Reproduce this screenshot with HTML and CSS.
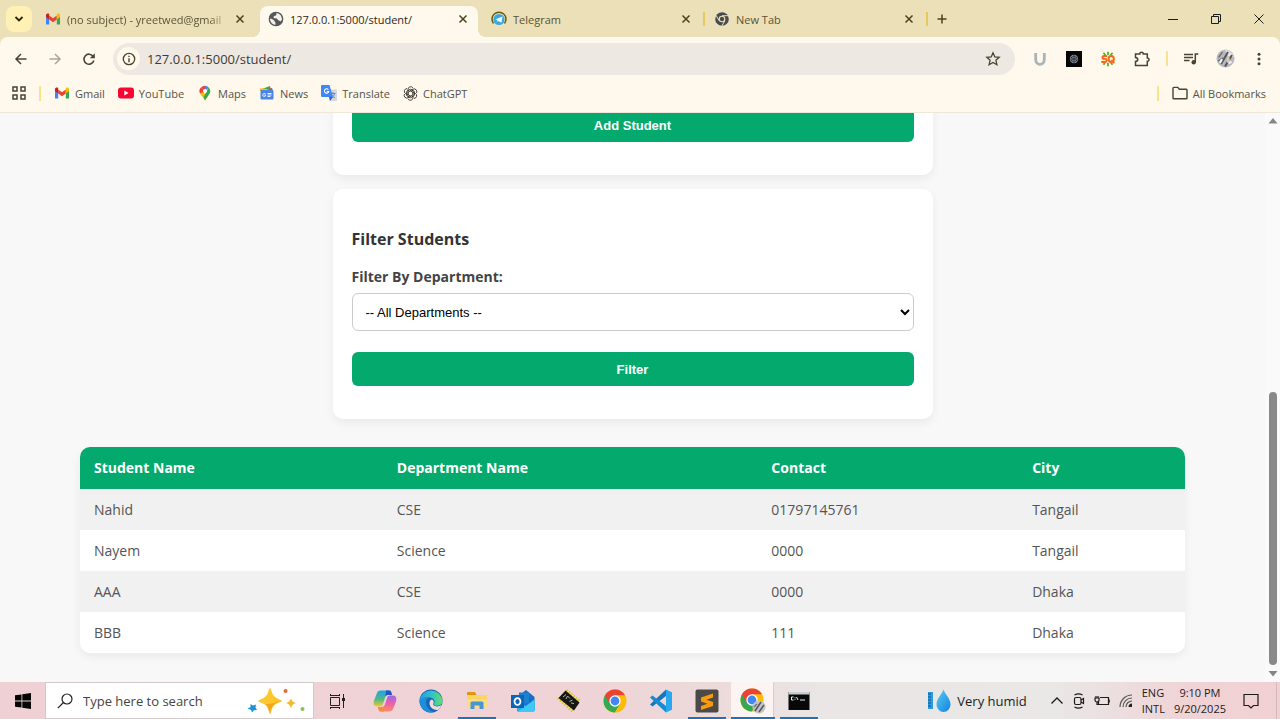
FILE: index.html
```html
<!DOCTYPE html>
<html lang="en">
<head>
<meta charset="utf-8">
<title>Students</title>
<link rel="stylesheet" href="styles.css">
</head>
<body>
<svg class="defs" aria-hidden="true">
  <symbol id="i-gmail" viewBox="0 0 16 16">
    <path d="M1 3.6V13.5H4.2V7.2z" fill="#4285f4"/><path d="M15 3.6V13.5H11.8V7.2z" fill="#34a853"/>
    <path d="M4.2 4.4L8 7.3l3.8-2.9v4L8 11.3 4.200 8.400z" fill="#ea4335"/>
    <path d="M1 4.200C1 2.500 2.900 1.900 4.200 2.900V8.400L1 6z" fill="#c5221f"/><path d="M15 4.200c0-1.700-1.900-2.300-3.200-1.300V8.400L15 6z" fill="#fbbc04"/>
  </symbol>
  <symbol id="i-close" viewBox="0 0 10 10"><path d="M1.500 1.500l7 7M8.500 1.500l-7 7" stroke="currentColor" stroke-width="1.500" fill="none"/></symbol>
  <symbol id="i-chrome" viewBox="0 0 24 24">
    <circle cx="12" cy="12" r="11.500" fill="#fbbc05"/>
    <path d="M2 6.300A11.500 11.500 0 0 0 11.700 23.500L17 14.900 12 12z" fill="#34a853"/>
    <path d="M2 6.300A11.500 11.500 0 0 1 22 6.300H12V12L7 14.900z" fill="#ea4335"/>
    <circle cx="12" cy="12" r="5.700" fill="#fff"/><circle cx="12" cy="12" r="4.400" fill="#4285f4"/>
  </symbol>
  <symbol id="i-gpt" viewBox="0 0 16 16">
    <g fill="none" stroke="currentColor" stroke-width=".9">
      <path id="petal" d="M8 5.200L5.300 6.800V3.500a2.900 2.900 0 0 1 5.400-1.300M5.300 5L8 3.400l3 1.700"/>
      <use href="#petal" transform="rotate(60 8 8)"/><use href="#petal" transform="rotate(120 8 8)"/><use href="#petal" transform="rotate(180 8 8)"/><use href="#petal" transform="rotate(240 8 8)"/><use href="#petal" transform="rotate(300 8 8)"/>
    </g>
  </symbol>
</svg>

<header class="browser">
  <div class="tabstrip">
    <button class="tab-search" aria-label="Search tabs"><svg width="10" height="10" viewBox="0 0 10 10"><path d="M1.500 3L5 6.500 8.500 3" fill="none" stroke="#2b2600" stroke-width="1.800"/></svg></button>
    <div class="tabs">
      <div class="tab">
        <svg class="favicon"><use href="#i-gmail"/></svg>
        <span class="tab-title fade">(no subject) - yreetwed@gmail</span>
        <button class="tab-close" aria-label="Close tab"><svg width="10" height="10"><use href="#i-close"/></svg></button>
      </div>
      <div class="tab active">
        <svg class="favicon" viewBox="0 0 16 16"><circle cx="8" cy="8" r="6.700" fill="#55575b"/><path d="M1.800 7.500c2 .2 3.200 1 4.300 2 1 .9.300 1.600 1.400 2.100v2.800C3.500 14 1.300 11 1.800 7.500zM8.500 1.500c-.5 1.600.4 1.900-.4 2.800-1 1-2.400.6-2.600 2.100-.1 1.200 3.500.2 4.200 2 .5 1.300 2 .7 2.600 2.200l1.600-1.300c.7-4-1.500-7.500-5.400-7.800z" fill="#f6f1e8"/><circle cx="8" cy="8" r="6.700" fill="none" stroke="#55575b" stroke-width="1.300"/></svg>
        <span class="tab-title">127.0.0.1:5000/student/</span>
        <button class="tab-close" aria-label="Close tab"><svg width="10" height="10"><use href="#i-close"/></svg></button>
      </div>
      <div class="tab">
        <svg class="favicon" viewBox="0 0 16 16"><path d="M2.500 12.500A7 7 0 1 1 13.500 12.500" fill="none" stroke="#6b5a10" stroke-width="1.500"/><circle cx="8" cy="8.500" r="5.600" fill="#35a9e0"/><path d="M4.200 8.500l7.400-3-1.200 6.200-2.600-1.800-1.200 1.200-.4-2z" fill="#fff"/></svg>
        <span class="tab-title">Telegram</span>
        <button class="tab-close" aria-label="Close tab"><svg width="10" height="10"><use href="#i-close"/></svg></button>
      </div>
      <div class="tab divided">
        <svg class="favicon" viewBox="0 0 16 16"><circle cx="8" cy="8" r="6.800" fill="#484b50"/><circle cx="8" cy="8" r="3.300" fill="#ece0b8"/><circle cx="8" cy="8" r="2.200" fill="#484b50"/><path d="M8 4.700h6.200M5.100 9.600L2 4.300M10.900 9.600L7.800 15" stroke="#ece0b8" stroke-width="1"/></svg>
        <span class="tab-title">New Tab</span>
        <button class="tab-close" aria-label="Close tab"><svg width="10" height="10"><use href="#i-close"/></svg></button>
      </div>
      <button class="new-tab" aria-label="New tab"><svg width="12" height="12" viewBox="0 0 12 12"><path d="M6 1.500v9M1.500 6h9" stroke="#4a431c" stroke-width="1.500"/></svg></button>
    </div>
    <div class="window-controls">
      <button aria-label="Minimize"><svg width="12" height="12" viewBox="0 0 12 12"><path d="M1 6.500h10" stroke="#1c1c1c"/></svg></button>
      <button aria-label="Restore"><svg width="12" height="12" viewBox="0 0 12 12"><path d="M1.500 3.500h7v7h-7zM3.500 3.500v-2h7v7h-2" fill="none" stroke="#1c1c1c"/></svg></button>
      <button aria-label="Close"><svg width="12" height="12" viewBox="0 0 12 12"><path d="M1.500 1.500l9 9M10.500 1.500l-9 9" stroke="#1c1c1c"/></svg></button>
    </div>
  </div>

  <div class="toolbar">
    <div class="nav">
      <button aria-label="Back"><svg width="14" height="14" viewBox="0 0 14 14"><path d="M12.500 7H2M7 2L2 7l5 5" fill="none" stroke="#474432" stroke-width="1.500"/></svg></button>
      <button aria-label="Forward"><svg width="14" height="14" viewBox="0 0 14 14"><path d="M1.500 7H12M7 2l5 5-5 5" fill="none" stroke="#aaa79c" stroke-width="1.500"/></svg></button>
      <button aria-label="Reload"><svg width="14" height="14" viewBox="0 0 14 14"><path d="M11.800 8.500A5 5 0 1 1 11 4.200l1.200 1.200" fill="none" stroke="#474432" stroke-width="1.600"/><path d="M12.800 1.200v5H7.800z" fill="#474432"/></svg></button>
    </div>
    <div class="omnibox">
      <button class="site-info" aria-label="Site information"><svg width="14" height="14" viewBox="0 0 14 14"><circle cx="7" cy="7" r="5.700" fill="none" stroke="#474432" stroke-width="1.300"/><path d="M7 6.200v4M7 3.700v1.400" stroke="#474432" stroke-width="1.400"/></svg></button>
      <input class="url" type="text" aria-label="Address" value="127.0.0.1:5000/student/">
      <button aria-label="Bookmark this tab"><svg width="16" height="16" viewBox="0 0 16 16"><path d="M8 1.800l1.800 4.100 4.400.4-3.300 3 1 4.400L8 11.400l-3.900 2.300 1-4.400-3.300-3 4.400-.4z" fill="none" stroke="#474432" stroke-width="1.300"/></svg></button>
    </div>
    <div class="extensions">
      <button aria-label="U extension"><svg width="16" height="16" viewBox="0 0 16 16"><path d="M3.700 2v6.800a4 4.200 0 0 0 8.600 0V2" fill="none" stroke="#a9b4b9" stroke-width="2.800"/></svg></button>
      <button aria-label="Assistant extension"><svg width="16" height="16" viewBox="0 0 16 16"><path d="M0 0h16v16H0z" fill="#050505"/><circle cx="8" cy="8" r="4.200" fill="#8d979d"/><path d="M5 6.500l3-1.500 3 1.500v3L8 11 5 9.500zM5 6.500l6 3M11 6.500l-6 3M8 4v8" fill="none" stroke="#20272b" stroke-width=".8"/></svg></button>
      <button aria-label="SQ extension"><svg width="16" height="16" viewBox="0 0 16 16"><g stroke="#55b22c" stroke-width="1.800"><path d="M8 .8v14.400M3.500 1.800l9 12M12.500 1.800l-9 12"/></g><rect x="1" y="4" width="14" height="8" rx="2" fill="#ffe9cc"/><path d="M7.200 5H4.200c-2.200 0-2.200 2.900 0 2.900h1c2.200 0 1.900 3.100-.2 3.100H1.300" fill="none" stroke="#f4681b" stroke-width="1.900"/><ellipse cx="11.200" cy="8" rx="2.600" ry="3" fill="#fff1d8" stroke="#f4681b" stroke-width="1.900"/><path d="M11.300 9l3 3.300" stroke="#f4681b" stroke-width="1.700"/></svg></button>
      <button aria-label="Extensions"><svg width="16" height="16" viewBox="0 0 16 16"><path d="M1.500 3h4.300c-.2-2.500 3.700-2.500 3.500 0h4v4c2.300-.2 2.300 3.400 0 3.200v4.300H1.500v-4c3-.3 3-3.600 0-3.900z" fill="none" stroke="#474432" stroke-width="1.500"/></svg></button>
      <span class="rule"></span>
      <button aria-label="Media controls"><svg width="16" height="16" viewBox="0 0 16 16"><path d="M1 3.500h9M1 6.500h9M1 9.500h5.500M12.300 11V3h3" fill="none" stroke="#474432" stroke-width="1.500"/><circle cx="10.700" cy="11.300" r="2.200" fill="#474432"/></svg></button>
      <button aria-label="Profile"><svg width="19" height="19" viewBox="0 0 19 19"><circle cx="9.500" cy="9.500" r="9" fill="#b9b8bd"/><path d="M9 1c4 .5 8 3 8.500 7L12 7z" fill="#e8e8ec"/><path d="M5 15L12 3M9 17.500L16 6" stroke="#55565b" stroke-width="2"/><path d="M2.500 8.500l4-5.500M2 12l5-3" stroke="#73747a" stroke-width="1.500"/><path d="M11 8l2-1 1 5-3 2z" fill="#e1c9a4"/><path d="M12.500 14l3-1M4 14l2-4" stroke="#f7f7fa" stroke-width="2"/></svg></button>
      <button aria-label="Menu"><svg width="14" height="14" viewBox="0 0 14 14"><g fill="#474432"><circle cx="7" cy="2.200" r="1.500"/><circle cx="7" cy="7" r="1.500"/><circle cx="7" cy="11.800" r="1.500"/></g></svg></button>
    </div>
  </div>

  <nav class="bookmarks" aria-label="Bookmarks">
    <button class="apps" aria-label="Apps"><svg width="14" height="14" viewBox="0 0 14 14"><path d="M1 1h4v4H1zM9 1h4v4H9zM1 9h4v4H1zM9 9h4v4H9z" fill="none" stroke="#474432" stroke-width="1.500"/></svg></button>
    <span class="rule"></span>
    <a href="#"><svg class="favicon"><use href="#i-gmail"/></svg>Gmail</a>
    <a href="#"><svg class="favicon" viewBox="0 0 16 16"><rect x="0" y="2.500" width="16" height="11" rx="3" fill="#f8062f"/><path d="M6.300 5.500v5L10.500 8z" fill="#fff"/></svg>YouTube</a>
    <a href="#"><svg class="favicon" viewBox="0 0 16 16"><path d="M8 .8a5.300 5.300 0 0 0-4 1.800L8 6z" fill="#ea4335"/><path d="M4 2.600A5.300 5.300 0 0 0 3 8.600L5.500 10 8.500 6z" fill="#ea4335"/><path d="M3 8.600c1 2.300 4.200 4 5 6.900l3-3.800L5.500 7z" fill="#fbbc04"/><path d="M11.500 2.400a5.300 5.300 0 0 1 1.300 5.900C11.800 10.700 8.800 12.500 8 15.500c-.4-1.200-.8-2-1.600-3z" fill="#34a853"/><path d="M8 .8a5.300 5.300 0 0 1 3.800 1.800L7.500 7z" fill="#4285f4"/><circle cx="8" cy="6.100" r="2" fill="#fff"/></svg>Maps</a>
    <a href="#"><svg class="favicon" viewBox="0 0 16 16"><path d="M3 4l8-3 1 4z" fill="#34a853"/><path d="M8 4l5-1 1 3z" fill="#ea4335"/><path d="M1 3.500h5L7 6H1z" fill="#fbbc04"/><rect x="1.500" y="5" width="13" height="9.500" rx="1" fill="#4a86e8"/><path d="M6.500 8.500H5.300a1.500 1.500 0 1 0 1.200 2.400V10H5.300M8.500 8.500h4M8.500 10h4M8.500 11.500h3" fill="none" stroke="#fff" stroke-width=".9"/></svg>News</a>
    <a href="#"><svg class="favicon" viewBox="0 0 16 16"><path d="M5.500 4.500H15a1 1 0 0 1 1 1V15a1 1 0 0 1-1 1H9z" fill="#d3d7de"/><path d="M9.500 8.500h5M12 7v1.500M13.700 8.500c-.5 2.200-1.700 3.600-3.700 4.500M10.500 9.500c.7 1.500 2 2.800 3.500 3.500" stroke="#6a83aa" stroke-width=".9" fill="none"/><path d="M1 0h7.500L12 12H1a1 1 0 0 1-1-1V1a1 1 0 0 1 1-1z" fill="#4285f4"/><path d="M7.400 4.600A2.200 2.200 0 1 0 7.800 6.500H5.800" fill="none" stroke="#fff" stroke-width="1.100"/><path d="M8 12h4l-3 4z" fill="#2d66c9"/></svg>Translate</a>
    <a href="#"><svg class="favicon gpt"><use href="#i-gpt"/></svg>ChatGPT</a>
    <span class="spacer"></span>
    <span class="rule"></span>
    <a href="#" class="all"><svg class="favicon" viewBox="0 0 16 16"><path d="M1 3.200a.8.800 0 0 1 .8-.8h4l1.500 1.800h7a.8.800 0 0 1 .7.800v8a.8.800 0 0 1-.8.800H1.800A.8.800 0 0 1 1 13z" fill="none" stroke="#474432" stroke-width="1.400"/></svg>All Bookmarks</a>
  </nav>
</header>

<div class="viewport">
  <main class="page">
    <form class="card">
      <button class="submit" type="button">Add Student</button>
    </form>
    <form class="card">
      <h2>Filter Students</h2>
      <label for="dept">Filter By Department:</label>
      <select id="dept"><option>-- All Departments --</option><option>CSE</option><option>Science</option></select>
      <button class="submit" type="button">Filter</button>
    </form>
    <table class="students">
      <colgroup><col class="c-name"><col class="c-dept"><col class="c-contact"><col class="c-city"></colgroup>
      <thead><tr><th>Student Name</th><th>Department Name</th><th>Contact</th><th>City</th></tr></thead>
      <tbody>
        <tr><td>Nahid</td><td>CSE</td><td>01797145761</td><td>Tangail</td></tr>
        <tr><td>Nayem</td><td>Science</td><td>0000</td><td>Tangail</td></tr>
        <tr><td>AAA</td><td>CSE</td><td>0000</td><td>Dhaka</td></tr>
        <tr><td>BBB</td><td>Science</td><td>111</td><td>Dhaka</td></tr>
      </tbody>
    </table>
  </main>
  <div class="scrollbar" aria-hidden="true">
    <svg width="10" height="6" viewBox="0 0 10 6"><path d="M5 0l4.500 5.500h-9z" fill="#858585"/></svg>
    <div class="track"><div class="thumb"></div></div>
    <svg width="10" height="6" viewBox="0 0 10 6"><path d="M5 5.500L.5 0h9z" fill="#858585"/></svg>
  </div>
</div>

<footer class="taskbar">
  <button class="start" aria-label="Start"><svg width="16" height="16" viewBox="0 0 16 16"><path d="M0 2.300l6.500-.9v6.100H0zM7.300 1.300L16 0v7.500H7.300zM0 8.400h6.500v6.200L0 13.700zM7.300 8.400H16V16l-8.700-1.300z" fill="#050505"/></svg></button>
  <div class="search">
    <svg width="16" height="16" viewBox="0 0 16 16"><circle cx="10" cy="6" r="5" fill="none" stroke="#222" stroke-width="1.200"/><path d="M6.500 9.500L.8 15.200" stroke="#222" stroke-width="1.200"/></svg>
    <input type="text" placeholder="Type here to search" aria-label="Type here to search">
    <svg width="58" height="26" viewBox="0 0 58 26"><path d="M23 1c2 7 3 9 11 12-8 3-9 4-11 12-2-8-3-9-11-12 8-3 9-5 11-12z" fill="#fcc62d" stroke="#fcc62d" stroke-width="1.500" stroke-linejoin="round"/><path d="M34 13c-8 3-9 4-11 12-1-4-2-7-4-9 7 0 9-2 15-3z" fill="#f2a51d"/><path d="M44 10c1 3.500 2 4 5 5-3 1-4 2-5 5.500-1-3.500-2-4.500-5-5.500 3-1 4-1.500 5-5z" fill="#f8b62b"/><path d="M3.500 16l2.500 1.500 3-1-.5 3 1.500 2.500-3 .2-2 2.300-1-2.700-3.500-1 3-1.700z" fill="#1c94dd"/><circle cx="38.500" cy="3" r="2" fill="#e8663c"/><circle cx="55.500" cy="21" r="2" fill="#8ac34a"/></svg>
  </div>
  <div class="apps-row">
    <button aria-label="Task view"><svg width="18" height="18" viewBox="0 0 18 18"><path d="M2.500 5.500h9v8h-9zM2.500 2v2M11.500 2v2M2.500 3.500h9M2.500 15.500h9M2.500 15v2M11.500 15v2M15.500 2v14" fill="none" stroke="#222"/><path d="M14 6h3v3h-3z" fill="#222"/></svg></button>
    <button aria-label="Copilot"><svg width="24" height="24" viewBox="0 0 24 24"><defs><linearGradient id="cpA" x1="0" y1="0" x2="0" y2="1"><stop offset="0" stop-color="#1aa7e8"/><stop offset=".55" stop-color="#51b884"/><stop offset="1" stop-color="#f3c82f"/></linearGradient><linearGradient id="cpB" x1="0" y1="0" x2="0" y2="1"><stop offset="0" stop-color="#9a69e8"/><stop offset=".5" stop-color="#ed5fae"/><stop offset="1" stop-color="#fa9060"/></linearGradient></defs><path d="M8 1.500h8c2 0 2.500 2 3 4.500h-4c-2 0-2.600 1.200-3.200 3.500L10 15c-.6 1.800-1.500 2.500-3 2.500H4C.5 17.500.3 14 1 11.500L4 4c.8-1.800 2-2.500 4-2.500z" fill="url(#cpA)"/><path d="M13 1.500h3c2 0 2.500 2 3 4.500h-4c-1.500 0-2 .6-2.600 2z" fill="#2554c4"/><path d="M16 22.500H8c-2 0-2.500-2-3-4.500h4c2 0 2.600-1.200 3.200-3.500L14 9c.6-1.800 1.500-2.500 3-2.500h3c3.500 0 3.700 3.500 3 6L20 20c-.8 1.800-2 2.500-4 2.500z" fill="url(#cpB)"/><path d="M11 22.500H8c-2 0-2.500-2-3-4.500h4c1.500 0 2-.6 2.600-2z" fill="#f28b43"/></svg></button>
    <button aria-label="Edge"><svg width="24" height="24" viewBox="0 0 24 24"><defs><linearGradient id="edA" x1="0" y1="0" x2="1" y2="0"><stop offset="0" stop-color="#249fe0"/><stop offset=".55" stop-color="#32c3c5"/><stop offset="1" stop-color="#67df62"/></linearGradient></defs><circle cx="12" cy="12" r="11.500" fill="#1766b8"/><path d="M.7 11A11.500 11.500 0 0 1 23.500 12c0 5-7 6-9 3.600 2.500-3 .5-7-4-7.200C5 8.200 1.500 10 .7 14z" fill="url(#edA)"/><path d="M.6 13c.2-4 5-5.500 8.500-4C5.500 11 6 20 15 23A11.500 11.500 0 0 1 .6 13z" fill="#1b8fd8"/><path d="M14 15.500c1.500 2.500 6 2.500 8.800.3-.8 2.200-2 3.700-3.300 4.900-3.500 1-9-1.500-9-6.500 0-2 1-3.300 2.200-3.800 2.200.8 2.600 3 1.300 5.100z" fill="#efdbdc"/></svg></button>
    <button class="running" aria-label="File Explorer"><svg width="22" height="22" viewBox="0 0 22 22"><path d="M1 3a1 1 0 0 1 1-1h7l1.500 3H1z" fill="#dc9510"/><path d="M1 5h19a1 1 0 0 1 1 1v12H1z" fill="#fcd462"/><path d="M1 9h20v9H1z" fill="#fbdd83"/><path d="M4.500 19v-6a1.500 1.500 0 0 1 1.500-1.500h10a1.500 1.500 0 0 1 1.500 1.500v6h-4v-3.500h-5V19z" fill="#4a97cf"/></svg></button>
    <button aria-label="Outlook"><svg width="24" height="24" viewBox="0 0 24 24"><path d="M6 8L15 1l8.500 7v14H6z" fill="#176fc1"/><path d="M8 3.500h10v11H8z" fill="#1d7fd0"/><path d="M6 11l9 6 8.500-7v11a2 2 0 0 1-2 2H8a2 2 0 0 1-2-2z" fill="#1fb3ee"/><path d="M6 23l17.500-12v10a2 2 0 0 1-2 2z" fill="#40c8f6"/><path d="M0 6h13v13H0z" fill="#0b64b8"/><ellipse cx="6.500" cy="12.500" rx="3" ry="3.400" fill="none" stroke="#fff" stroke-width="1.800"/></svg></button>
    <button aria-label="Chip tool"><svg width="24" height="24" viewBox="0 0 24 24"><path d="M9.500 1L23 12.500M1 9l15 13.500" stroke="#d9c81c" stroke-width="3" stroke-dasharray="1.500 1.500"/><path d="M8.500 1.500L22.500 13.500 17 21.500 1.500 9z" fill="#171714"/><path d="M6 8l3-2.500M9 10l1.500-3L13 9.500M12.500 12.500l3-1.500M14 14l3 .5" fill="none" stroke="#b5b5a8" stroke-width="1"/></svg></button>
    <button aria-label="Chrome"><svg width="24" height="24"><use href="#i-chrome"/></svg></button>
    <button aria-label="Visual Studio Code"><svg width="24" height="24" viewBox="0 0 24 24"><path d="M17 .5v6.500L3.500 17.500 1 15.500z" fill="#1478bd"/><path d="M17 23.500V17L3.500 6.500 1 8.500z" fill="#168cd5"/><path d="M17 .5l6 2.800v17.400l-6 2.800z" fill="#29a8f2"/></svg></button>
    <button class="running" aria-label="Sublime Text"><svg width="24" height="24" viewBox="0 0 24 24"><rect x=".5" y=".5" width="23" height="23" rx="2" fill="#4b4a47"/><path d="M18 4.500v4l-6.500 2.200L18 13v4L6 21v-4l6.500-2.300L6 12.500v-4z" fill="#fb9a0b"/></svg></button>
    <button class="running current" aria-label="Chrome, profile window"><svg width="26" height="26" viewBox="0 0 26 26"><use href="#i-chrome" width="24" height="24"/><circle cx="19" cy="19" r="6.500" fill="#c3c2c5"/><path d="M15 23l6-9M19 24l5-7" stroke="#55565b" stroke-width="1.500"/><path d="M14 19l3-3" stroke="#777" stroke-width="1.500"/></svg></button>
    <button class="running" aria-label="Command Prompt"><svg width="22" height="20" viewBox="0 0 22 20"><path d="M.5 1h21v18H.5z" fill="#080808"/><path d="M.5 1h21v2.500H.5z" fill="#c9cdd0"/><path d="M5.500 6H3.500v3h2M7 6.500v.8M7 8.300v.7M8.500 6l1.500 3M12 9h5" fill="none" stroke="#eee"/></svg></button>
  </div>
  <div class="tray">
    <div class="weather"><svg width="24" height="24" viewBox="0 0 24 24"><defs><linearGradient id="drop" x1="0" y1="0" x2="1" y2="1"><stop offset="0" stop-color="#54d0f4"/><stop offset="1" stop-color="#1680dc"/></linearGradient></defs><path d="M1 3h5v17H1z" fill="#2b9ae0"/><path d="M1 5h3M1 8h3M1 11h3M1 14h3M1 17h3" stroke="#0b568e"/><path d="M16.500.5C18 5 23.500 9.500 23.500 15.500a7 7.500 0 0 1-14 0C9.500 9.500 15 5 16.500.5z" fill="url(#drop)"/></svg><span>Very humid</span></div>
    <svg width="14" height="14" viewBox="0 0 14 14"><path d="M1.500 9.500L7 4l5.500 5.500" fill="none" stroke="#1c1c1c" stroke-width="1.300"/></svg>
    <svg width="12" height="16" viewBox="0 0 12 16"><rect x="1.500" y="4.500" width="6.500" height="7" rx="1.500" fill="none" stroke="#1c1c1c" stroke-width="1.200"/><path d="M8 7l2.500-1.500v5L8 9M1.500 2c2.500-1.500 5.500-1.500 8 0M1.500 14c2.500 1.500 5.500 1.500 8 0" fill="none" stroke="#1c1c1c" stroke-width="1.200"/></svg>
    <svg width="16" height="14" viewBox="0 0 16 14"><path d="M6 3.500h8.500v7H4.500V8M1 4h4v2a2 2 0 0 1-4 0zM2 2v2M4 2v2M3 8v2.500h2" fill="none" stroke="#1c1c1c" stroke-width="1.200"/><path d="M15.300 5.500v3" stroke="#1c1c1c"/></svg>
    <svg width="14" height="14" viewBox="0 0 14 14"><path d="M1 13A12 12 0 0 1 13 1M4 13A9 9 0 0 1 13 4M7 13A6 6 0 0 1 13 7" fill="none" stroke="#555" stroke-width="1.200"/><path d="M9.500 13A3.500 3.500 0 0 1 13 9.500V13z" fill="#222"/></svg>
    <div class="stack lang"><span>ENG</span><span>INTL</span></div>
    <div class="stack clock"><span>9:10 PM</span><span>9/20/2025</span></div>
    <button aria-label="Notifications"><svg width="16" height="16" viewBox="0 0 16 16"><path d="M1 1.500h14v11h-4.500L8 15l-2.500-2.500H1z" fill="none" stroke="#1c1c1c" stroke-width="1.200"/></svg></button>
    <span class="show-desktop"></span>
  </div>
</footer>
</body>
</html>
```
FILE: styles.css
```css
* { box-sizing: border-box; }
body {
  margin: 0;
  height: 100vh;
  display: flex;
  flex-direction: column;
  overflow: hidden;
  font-family: "Open Sans", "Noto Sans", sans-serif;
  background: #f8f8f8;
}
.defs { position: absolute; width: 0; height: 0; }
svg { flex: none; display: block; }
button { border: 0; padding: 0; background: none; font: inherit; color: inherit; display: flex; align-items: center; justify-content: center; }
input { border: 0; padding: 0; background: none; font: inherit; color: inherit; min-width: 0; outline: 0; }
a { color: inherit; text-decoration: none; }

/* Browser chrome */
.browser { flex: none; background: #ece0b8; border-bottom: 1px solid #eee8da; color: #4f4b3a; }
.tabstrip { display: flex; height: 37px; padding-left: 6px; }
.tab-search { width: 26px; height: 26px; margin: 6px 5px 0 0; border-radius: 8px; background: #fff0b5; flex: none; }
.tabs { display: flex; flex: 1; min-width: 0; }
.tab { position: relative; flex: 0 1 223px; min-width: 0; display: flex; align-items: center; gap: 6px; height: 31px; margin-top: 6px; padding: 0 15px 5px 8px; font-size: 11px; color: #5b5434; }
.favicon { width: 16px; height: 16px; flex: none; }
.tab-title { flex: 1; min-width: 0; overflow: hidden; white-space: nowrap; }
.fade { -webkit-mask-image: linear-gradient(90deg, #000 88%, transparent); mask-image: linear-gradient(90deg, #000 88%, transparent); }
.tab-close { width: 10px; height: 10px; color: #4a431c; }
.tab.active { flex-basis: 218px; margin-right: 5px; padding-right: 10px; background: #fff8ec; border-radius: 8px 8px 0 0; color: #2b2a22; }
.tab.active::before, .tab.active::after { content: ""; position: absolute; bottom: 0; width: 8px; height: 8px; }
.tab.active::before { left: -8px; background: radial-gradient(circle at 0 0, transparent 8px, #fff8ec 8px); }
.tab.active::after { right: -8px; background: radial-gradient(circle at 100% 0, transparent 8px, #fff8ec 8px); }
.tab.divided::before, .tab.divided::after { content: ""; position: absolute; top: 6px; width: 2px; height: 14px; background: #e3c95f; }
.tab.divided::before { left: -3px; }
.tab.divided::after { right: 1px; }
.new-tab { width: 26px; height: 26px; margin-top: 6px; }
.window-controls { display: flex; flex: none; }
.window-controls button { width: 43px; height: 37px; }

.toolbar { display: flex; align-items: center; height: 43px; padding: 0 4px; background: #fff8ec; border-radius: 8px 8px 0 0; }
.nav { display: flex; flex: none; }
.nav button { width: 34px; height: 32px; }
.omnibox { flex: 1; min-width: 0; display: flex; align-items: center; height: 32px; margin-left: 7px; padding: 0 14px 0 4px; border-radius: 16px; background: #ede8e1; }
.site-info { width: 23px; height: 23px; border-radius: 50%; background: #fff8ec; flex: none; }
.url { flex: 1; margin-left: 7px; font-size: 13px; color: #3d3b35; }
.extensions { display: flex; align-items: center; flex: none; padding-left: 8px; }
.extensions button { width: 34px; height: 32px; }
.rule { flex: none; width: 2px; height: 15px; background: #f8e38c; }
.extensions .rule { margin: 0 6px 0 7px; }

.bookmarks { display: flex; align-items: center; height: 32px; padding: 0 14px 6px 12px; background: #fff8ec; font-size: 11px; color: #55534a; }
.bookmarks a { display: flex; align-items: center; gap: 5px; margin-left: 13px; white-space: nowrap; }
.apps { width: 14px; height: 14px; margin-right: 13px; }
.gpt { width: 15px; height: 15px; color: #33322c; }
.spacer { flex: 1; }

/* Web page */
.viewport { flex: 1; min-height: 0; display: flex; }
.page { flex: 1; min-width: 0; display: flex; flex-direction: column; justify-content: flex-end; align-items: center; padding: 0 80px 29px; overflow: hidden; }
.card { width: 100%; max-width: 600px; flex: none; display: flex; flex-direction: column; margin: 0 0 14px; padding: 38px 19px 33px; background: #fff; border-radius: 10px; box-shadow: 0 4px 10px rgba(0, 0, 0, .06); }
.card h2 { margin: 0 0 16px; font-size: 16px; line-height: 24px; font-weight: 700; color: #333; }
.card label { margin-bottom: 6px; font-size: 14px; line-height: 20px; font-weight: 700; color: #444; }
.card select { width: 100%; height: 38px; margin-bottom: 21px; padding: 0 9px; border: 1px solid #ccc; border-radius: 6px; background: #fff; font: 13px "Liberation Sans", Arial, sans-serif; color: #000; }
.submit { height: 34px; border-radius: 6px; background: #04aa6d; color: #fff; font: bold 13px "Liberation Sans", Arial, sans-serif; }
.students { width: 100%; flex: none; margin-top: 14px; border-spacing: 0; table-layout: fixed; border-radius: 10px; overflow: hidden; background: #fff; box-shadow: 0 4px 10px rgba(0, 0, 0, .06); }
.c-name { width: 27.4%; }
.c-dept { width: 33.9%; }
.c-contact { width: 23.6%; }
.students th, .students td { padding: 0 14px; text-align: left; font-size: 14px; line-height: 20px; }
.students th { height: 42px; background: #04aa6d; color: #fff; font-weight: 700; }
.students td { height: 41px; color: #555; }
.students tbody tr:nth-child(odd) { background: #f1f1f1; }
.scrollbar { flex: none; width: 15px; display: flex; flex-direction: column; align-items: center; padding: 5px 0; background: #fafafa; }
.track { flex: 1; display: flex; flex-direction: column; justify-content: flex-end; padding: 6px 0; }
.thumb { width: 8px; height: 51%; border-radius: 4px; background: #898989; }

/* Taskbar */
.taskbar { flex: none; display: flex; height: 37px; background: linear-gradient(90deg, #efd1d5 0%, #efd3d6 45%, #ecdada 56%, #e9e6e5 64%, #e9e8e7 82%, #f0d3d6 93%, #f1d0d3 100%); color: #1c1c1c; }
.start { width: 45px; }
.search { flex: 0 1 269px; min-width: 0; display: flex; align-items: center; padding: 0 8px 0 11px; background: #fff; border: 1px solid #d5c8ca; }
.search input { flex: 1; margin-left: 10px; font-size: 13px; color: #444; }
.search input::placeholder { color: #444; opacity: 1; }
.apps-row { display: flex; flex: none; }
.apps-row button { position: relative; width: 46px; }
.apps-row button:first-child { margin-right: 2px; }
.running::after { content: ""; position: absolute; left: 4px; right: 4px; bottom: 0; height: 2px; background: #1b73b9; }
.current { background: linear-gradient(90deg, transparent 1px, #fbf4f2 1px, #fbf4f2 43px, #d8cfcd 43px, #d8cfcd 44px, transparent 44px); }
.current::after { left: 1px; right: 1px; }
.tray { flex: 1; display: flex; align-items: center; justify-content: flex-end; gap: 9px; padding-right: 3px; white-space: nowrap; }
.weather { display: flex; align-items: center; gap: 6px; margin-right: 14px; font-size: 13px; }
.stack { display: flex; flex-direction: column; font-size: 11px; line-height: 16px; }
.clock { align-items: center; }
.tray button { width: 32px; height: 37px; }
.show-desktop { width: 1px; height: 37px; background: #d4b9bc; }
```
